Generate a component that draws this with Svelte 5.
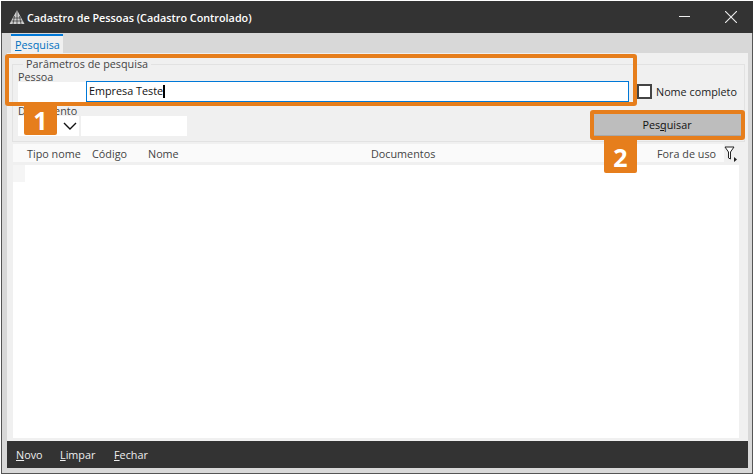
<script>
    let columns = [
        { label: "Tipo nome", width: 65 },
        { label: "Código", width: 56 },
        { label: "Nome", width: 223 },
        { label: "Documentos", width: 286 },
        { label: "Fora de uso", width: 60 }
    ];
</script>

<div class="window">
    <header class="titlebar">
        <svg class="logo" width="16" height="14" viewBox="0 0 16 14">
            <path d="M8 0 L15.5 14 L0.5 14 Z" fill="#d0d0d0" />
            <path d="M8 0 V14 M5.5 6 L4 14 M10.5 6 L12 14 M4 8 H12 M2.6 11 H13.4" stroke="#333" stroke-width="0.7" />
        </svg>
        <span class="title">Cadastro de Pessoas (Cadastro Controlado)</span>
        <div class="winbtns">
            <svg width="11" height="12" viewBox="0 0 11 12"><path d="M0 5.5 H11" stroke="#eee" /></svg>
            <svg width="12" height="12" viewBox="0 0 12 12"><path d="M0 0 L12 12 M12 0 L0 12" stroke="#eee" stroke-width="1.1" /></svg>
        </div>
    </header>

    <div class="body">
        <div class="tabs">
            <div class="tab"><u>P</u>esquisa</div>
        </div>

        <div class="panel">
            <fieldset>
                <legend>Parâmetros de pesquisa</legend>
                <div class="label">Pessoa</div>
                <div class="row">
                    <div class="code"></div>
                    <div class="name">Empresa Teste<i class="caret"></i></div>
                    <div class="check"><span class="box"></span>Nome completo</div>
                </div>
                <div class="label doc">Documento</div>
                <div class="row bottom">
                    <div class="combo">
                        <svg width="14" height="8" viewBox="0 0 14 8"><path d="M1 1 L7 7 L13 1" fill="none" stroke="#111" stroke-width="1.4" /></svg>
                    </div>
                    <div class="docnum"></div>
                    <button class="search">Pes<u>q</u>uisar</button>
                </div>
            </fieldset>

            <div class="grid">
                <div class="gridhead">
                    <div class="cols">
                        {#each columns as c}
                            <span style="width: {c.width}px">{c.label}</span>
                        {/each}
                    </div>
                    <svg class="filter" width="13" height="16" viewBox="0 0 13 16">
                        <path d="M1 1 H10 L6.5 6 V13 L4.5 12 V6 Z" fill="#fff" stroke="#222" />
                        <path d="M10 11 L13 13.5 L10 16 Z" fill="#222" />
                    </svg>
                </div>
                <div class="gridbody"><div class="rowhead"></div></div>
            </div>
        </div>

        <footer class="bottombar">
            <span class="novo"><u>N</u>ovo</span>
            <span class="limpar"><u>L</u>impar</span>
            <span><u>F</u>echar</span>
        </footer>
    </div>

    <div class="mark m1"></div>
    <div class="badge b1">1</div>
    <div class="mark m2"></div>
    <div class="badge b2">2</div>
</div>

<style>
    :global(body) {
        margin: 0;
        background: #fff;
    }
    .window {
        position: relative;
        width: 754px;
        height: 476px;
        box-sizing: border-box;
        padding: 1px;
        font-family: "Open Sans", "Noto Sans", sans-serif;
        font-size: 10.8px;
        color: #444;
        overflow: hidden;
    }
    .titlebar {
        height: 32px;
        background: #333;
        color: #fff;
        display: flex;
        align-items: center;
        padding-left: 8px;
        gap: 2px;
    }
    .title {
        font-weight: 600;
    }
    .winbtns {
        margin-left: auto;
        display: flex;
        align-items: center;
        gap: 35px;
        padding-right: 16px;
    }
    .body {
        height: 441px;
        background: #d8d8d8;
        border: 1px solid #555;
        border-top: 0;
        box-sizing: border-box;
        padding: 0 4px 5px 5px;
        display: flex;
        flex-direction: column;
    }
    .tabs {
        height: 20px;
        padding: 1px 0 0 4px;
        box-sizing: border-box;
        flex: none;
    }
    .tab {
        width: 52px;
        height: 19px;
        box-sizing: border-box;
        background: #f0f0f0;
        border-top: 2px solid #0078d7;
        color: #0070c0;
        padding-left: 4px;
        line-height: 17px;
    }
    .panel {
        flex: 1;
        background: #f0f0f0;
        padding: 4px 3px 0 5px;
        display: flex;
        flex-direction: column;
        min-height: 0;
    }
    fieldset {
        margin: 0;
        padding: 0 0 0 5px;
        border: 1px solid #e2e2e2;
        height: 85px;
        box-sizing: border-box;
        flex: none;
    }
    legend {
        padding: 0 3px;
        margin-left: 5px;
        line-height: 14px;
    }
    .label {
        line-height: 13px;
        height: 11px;
        margin-top: -1px;
    }
    .label.doc {
        margin-top: 3px;
        line-height: 11px;
    }
    .row {
        display: flex;
        align-items: center;
    }
    .row.bottom {
        align-items: flex-end;
    }
    .code {
        width: 68px;
        height: 20px;
        background: #fff;
        flex: none;
    }
    .name {
        width: 543px;
        height: 21px;
        box-sizing: border-box;
        border: 1px solid #0078d7;
        background: #fff;
        color: #111;
        padding-left: 2px;
        line-height: 18px;
        flex: none;
    }
    .caret {
        display: inline-block;
        width: 1.5px;
        height: 13px;
        background: #000;
        vertical-align: -3px;
    }
    .check {
        display: flex;
        align-items: center;
        gap: 4px;
        margin-left: 8px;
        color: #222;
        white-space: nowrap;
    }
    .box {
        width: 15px;
        height: 15px;
        box-sizing: border-box;
        border: 2px solid #444;
        background: #fff;
    }
    .combo {
        width: 61px;
        height: 20px;
        background: #fff;
        display: flex;
        align-items: center;
        justify-content: flex-end;
        padding-right: 2px;
        box-sizing: border-box;
        flex: none;
    }
    .docnum {
        width: 106px;
        height: 20px;
        margin-left: 2px;
        background: #fff;
        flex: none;
    }
    .search {
        margin-left: auto;
        margin-right: 3px;
        margin-top: -2px;
        width: 148px;
        height: 22px;
        border: 0;
        border-bottom: 1px solid #a8a8a8;
        background: #bdbdbd;
        font: inherit;
        color: #111;
        padding: 0;
    }
    .grid {
        flex: 1;
        margin: 2px 6px 0 1px;
        min-height: 0;
        display: flex;
        flex-direction: column;
    }
    .gridhead {
        height: 21px;
        flex: none;
        display: flex;
        align-items: flex-start;
        justify-content: space-between;
    }
    .cols {
        display: flex;
        height: 18px;
        width: 712px;
        background: #fafafa;
        padding-left: 14px;
        box-sizing: border-box;
        align-items: center;
    }
    .cols span {
        flex: none;
        white-space: nowrap;
    }
    .filter {
        margin: 2px 2px 0 0;
    }
    .gridbody {
        flex: 1;
        background: #fff;
        margin-bottom: 3px;
    }
    .rowhead {
        width: 12px;
        height: 17px;
        background: #f5f5f5;
    }
    .bottombar {
        flex: none;
        height: 27px;
        box-sizing: border-box;
        padding: 0 0 1px 9px;
        background: #333;
        color: #eee;
        display: flex;
        align-items: center;
    }
    .novo {
        width: 44px;
    }
    .limpar {
        width: 54px;
    }
    .mark {
        position: absolute;
        border: 4px solid #e67e1c;
        border-radius: 3px;
        box-sizing: border-box;
    }
    .m1 {
        left: 5px;
        top: 54px;
        width: 632px;
        height: 52px;
    }
    .m2 {
        left: 590px;
        top: 110px;
        width: 155px;
        height: 30px;
    }
    .badge {
        position: absolute;
        background: #e67e1c;
        color: #fff;
        font-weight: 700;
        font-size: 25px;
        display: flex;
        align-items: center;
        justify-content: center;
        border-radius: 0 0 2px 2px;
    }
    .b1 {
        left: 24px;
        top: 105px;
        width: 33px;
        height: 30px;
    }
    .b2 {
        left: 604px;
        top: 140px;
        width: 33px;
        height: 33px;
    }
</style>
